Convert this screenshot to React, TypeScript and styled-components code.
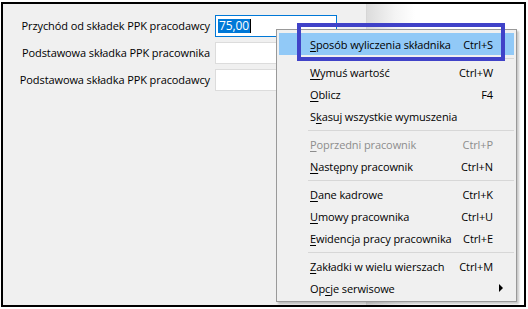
import styled, { createGlobalStyle } from 'styled-components';

const GlobalStyle = createGlobalStyle`
  body {
    margin: 0;
    background: #fff;
    font-family: 'Open Sans', 'Noto Sans', sans-serif;
    font-size: 11px;
    letter-spacing: -0.1px;
    color: #000;
  }
`;

interface Field {
  label: string;
  value?: string;
}

const fields: Field[] = [
  { label: 'Przychód od składek PPK pracodawcy', value: '75,00' },
  { label: 'Podstawowa składka PPK pracownika' },
  { label: 'Podstawowa składka PPK pracodawcy' },
];

interface MenuEntry {
  before?: string;
  key?: string;
  after: string;
  shortcut?: string;
  disabled?: boolean;
  active?: boolean;
  submenu?: boolean;
}

const menu: (MenuEntry | 'sep')[] = [
  { key: 'S', after: 'posób wyliczenia składnika', shortcut: 'Ctrl+S', active: true },
  'sep',
  { key: 'W', after: 'ymuś wartość', shortcut: 'Ctrl+W' },
  { key: 'O', after: 'blicz', shortcut: 'F4' },
  { before: 'S', key: 'k', after: 'asuj wszystkie wymuszenia' },
  'sep',
  { key: 'P', after: 'oprzedni pracownik', shortcut: 'Ctrl+P', disabled: true },
  { key: 'N', after: 'astępny pracownik', shortcut: 'Ctrl+N' },
  'sep',
  { key: 'D', after: 'ane kadrowe', shortcut: 'Ctrl+K' },
  { key: 'U', after: 'mowy pracownika', shortcut: 'Ctrl+U' },
  { key: 'E', after: 'widencja pracy pracownika', shortcut: 'Ctrl+E' },
  'sep',
  { key: 'Z', after: 'akładki w wielu wierszach', shortcut: 'Ctrl+M' },
  { before: 'Op', key: 'c', after: 'je serwisowe', submenu: true },
];

const App = () => {
  return (
    <>
      <GlobalStyle />
      <Frame>
        <FormPanel>
          <FieldGrid>
            {fields.map((f, i) => (
              <FieldRow key={f.label}>
                <Label>{f.label}</Label>
                <Input $focused={i === 0}>
                  {f.value && <Selected>{f.value}</Selected>}
                  {f.value && <Caret />}
                </Input>
              </FieldRow>
            ))}
          </FieldGrid>
        </FormPanel>
        <SidePanel />

        <ContextMenu>
          {menu.map((m, i) =>
            m === 'sep' ? (
              <Separator key={i} />
            ) : (
              <Item key={i} $active={m.active} $disabled={m.disabled}>
                <ItemLabel>
                  {m.before}
                  <Mnemonic>{m.key}</Mnemonic>
                  {m.after}
                </ItemLabel>
                {m.shortcut && <Shortcut>{m.shortcut}</Shortcut>}
                {m.submenu && <Arrow />}
              </Item>
            )
          )}
        </ContextMenu>
        <Callout />
      </Frame>
    </>
  );
};

const Frame = styled.div`
  position: relative;
  display: flex;
  box-sizing: border-box;
  width: 525px;
  height: 305px;
  margin: 2px 0 0 1px;
  border: 2px solid #000;
`;

const FormPanel = styled.section`
  width: 363px;
  background: #f0f0f0;
  border-right: 1px solid #d6d6d6;
  padding-top: 11px;
`;

const SidePanel = styled.div`
  flex: 1;
  background: linear-gradient(to right, #dcdcdc 0, #f4f4f4 28px, #fff 48px);
`;

const FieldGrid = styled.div`
  display: flex;
  flex-direction: column;
  gap: 5px;
`;

const FieldRow = styled.div`
  display: grid;
  grid-template-columns: 207px 122px;
  column-gap: 5px;
  align-items: center;
`;

const Label = styled.span`
  text-align: right;
  white-space: nowrap;
  line-height: 22px;
`;

const Input = styled.div<{ $focused?: boolean }>`
  display: flex;
  align-items: center;
  box-sizing: border-box;
  height: 22px;
  padding-left: 2px;
  background: #fff;
  border: 1px solid ${({ $focused }) => ($focused ? '#0078d7' : '#dcdcdc')};
`;

const Selected = styled.span`
  background: #0078d7;
  color: #fff;
  font-size: 12px;
  line-height: 14px;
  padding: 0 1px;
`;

const Caret = styled.span`
  width: 1px;
  height: 14px;
  background: #000;
`;

const ContextMenu = styled.div`
  position: absolute;
  left: 273px;
  top: 25px;
  box-sizing: border-box;
  width: 241px;
  padding: 3px 2px 2px;
  background: #f0f0f0;
  border: 1px solid #999;
  box-shadow: 2px 2px 2px rgba(0, 0, 0, 0.22);
`;

const Item = styled.div<{ $active?: boolean; $disabled?: boolean }>`
  position: relative;
  display: flex;
  justify-content: space-between;
  align-items: center;
  height: 22px;
  padding: 0 21px 0 31px;
  white-space: nowrap;
  background: ${({ $active }) => ($active ? '#91c9f7' : 'transparent')};
  color: ${({ $disabled }) => ($disabled ? '#8d8d8d' : '#000')};
`;

const ItemLabel = styled.span``;

const Mnemonic = styled.span`
  text-decoration: underline;
  text-underline-offset: 2px;
`;

const Shortcut = styled.span`
  margin-left: 0;
`;

const Arrow = styled.span`
  position: absolute;
  right: 11px;
  top: 7px;
  width: 0;
  height: 0;
  border-top: 4px solid transparent;
  border-bottom: 4px solid transparent;
  border-left: 4px solid #000;
`;

const Separator = styled.div`
  height: 6px;
  margin-left: 29px;
  background: linear-gradient(#d7d7d7, #d7d7d7) 0 3px / 100% 1px no-repeat;
`;

const Callout = styled.div`
  position: absolute;
  left: 294px;
  top: 19px;
  width: 208px;
  height: 38px;
  box-sizing: border-box;
  border: 4px solid #4042c8;
`;

export default App;
